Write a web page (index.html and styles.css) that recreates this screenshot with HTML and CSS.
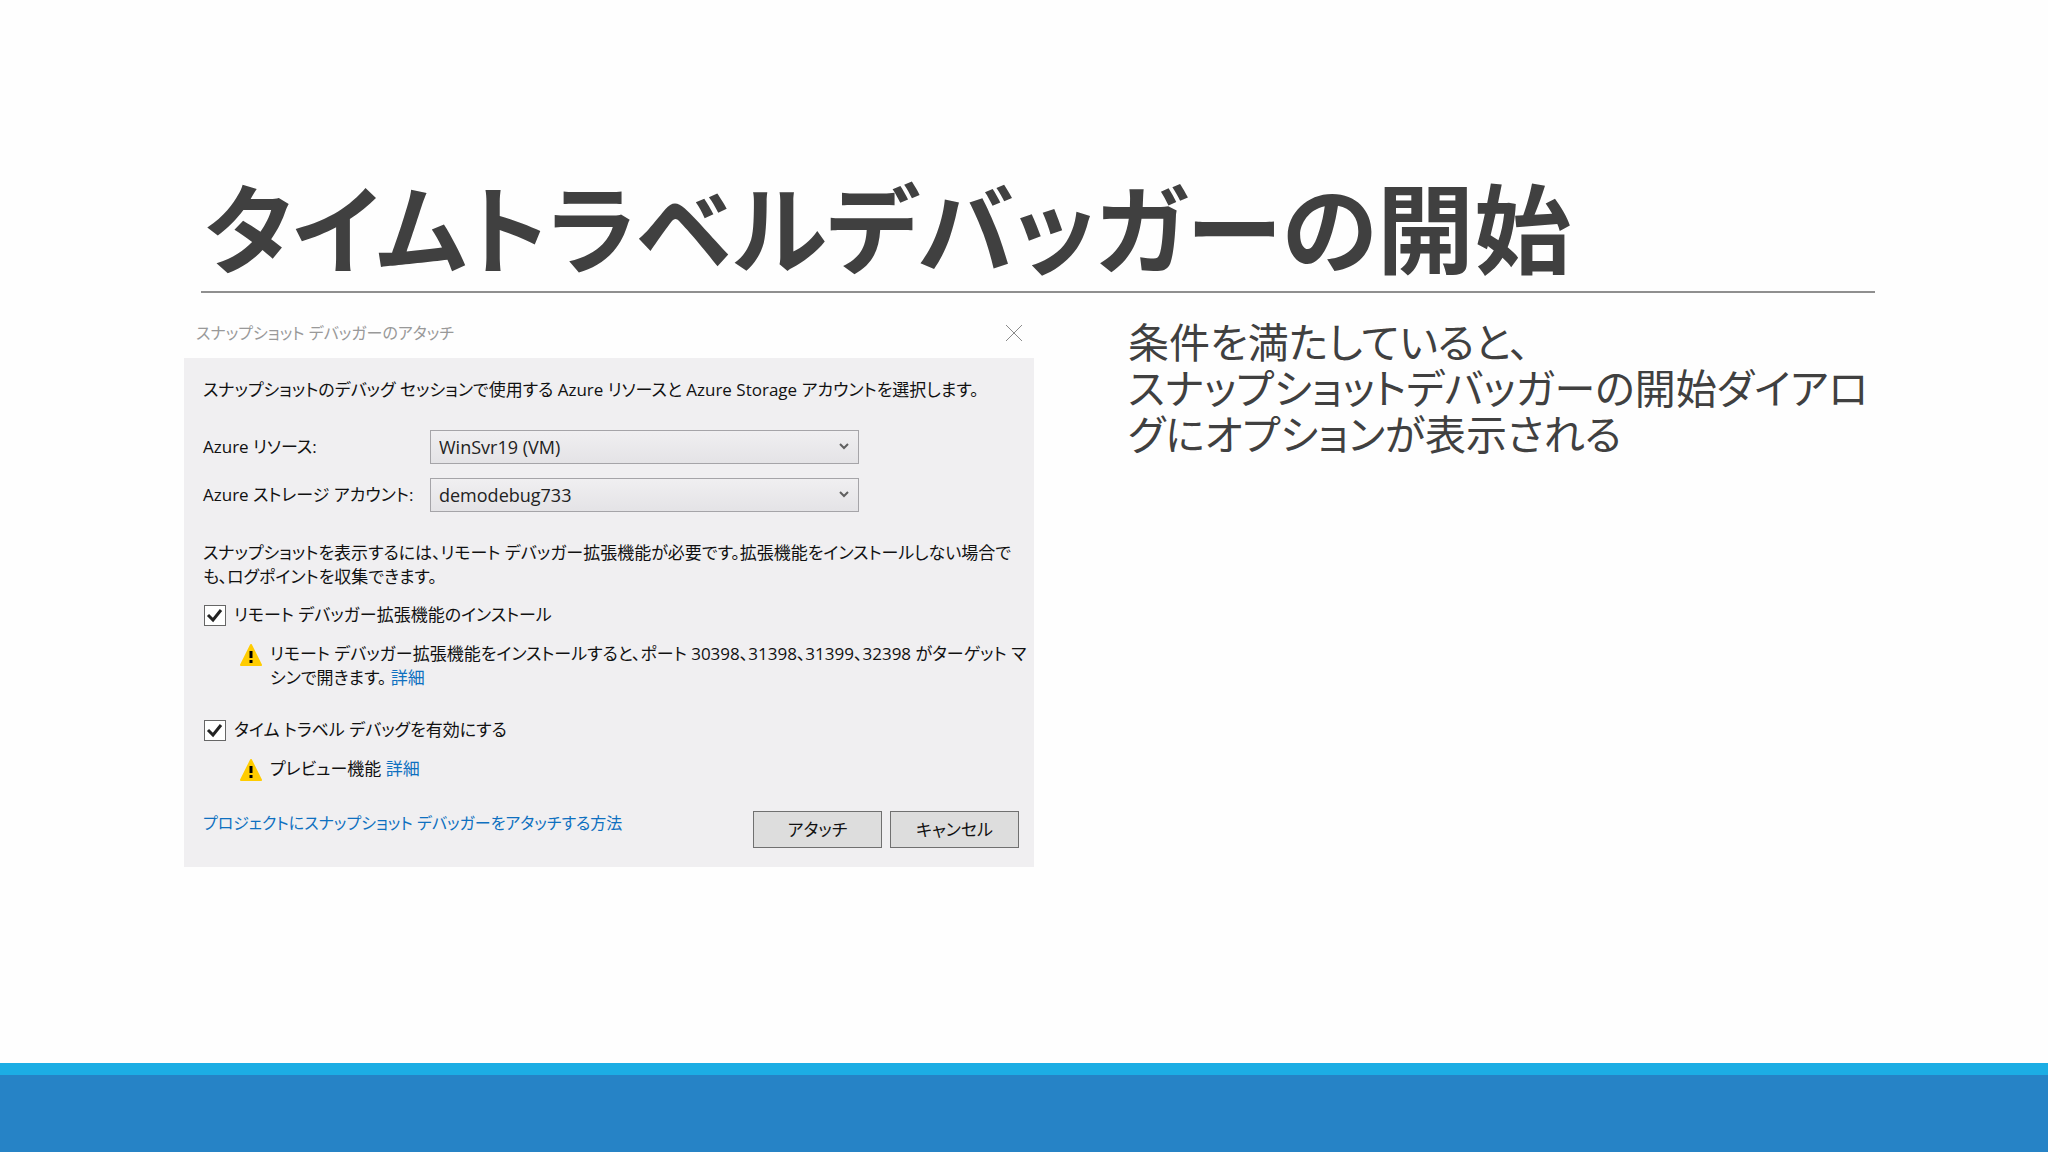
FILE: index.html
```html
<!DOCTYPE html>
<html lang="ja">
    <head>
        <meta charset="utf-8">
        <title>タイムトラベルデバッガーの開始</title>
        <link rel="stylesheet" href="styles.css">
    </head>
    <body>
        <header class="slide-header">
            <h1>タイムトラベルデバッガーの開始</h1>
        </header>
        <main class="slide-body">
            <form class="dialog">
                <div class="titlebar">
                    <span>スナップショット デバッガーのアタッチ</span>
                    <button type="button" class="close" aria-label="閉じる">
                        <svg width="18" height="18" viewBox="0 0 18 18"><path d="M1 1L17 17M17 1L1 17"/></svg>
                    </button>
                </div>
                <div class="content">
                    <p class="intro">スナップショットのデバッグ セッションで使用する Azure リソースと Azure Storage アカウントを選択します。</p>
                    <div class="field">
                        <label for="resource">Azure リソース:</label>
                        <select id="resource"><option>WinSvr19 (VM)</option></select>
                    </div>
                    <div class="field">
                        <label for="storage">Azure ストレージ アカウント:</label>
                        <select id="storage"><option>demodebug733</option></select>
                    </div>
                    <p class="note">スナップショットを表示するには、リモート デバッガー拡張機能が必要です。拡張機能をインストールしない場合で<br>も、ログポイントを収集できます。</p>
                    <div class="check">
                        <input id="remote" type="checkbox" checked>
                        <label for="remote">リモート デバッガー拡張機能のインストール</label>
                    </div>
                    <div class="warning">
                        <svg width="24" height="24" viewBox="0 0 24 24"><path class="tri" d="M12 3L22 23H2Z"/><path class="mark" d="M12 9V16M12 18V21"/></svg>
                        <p>リモート デバッガー拡張機能をインストールすると、ポート 30398、31398、31399、32398 がターゲット マ<br>シンで開きます。 <a href="#">詳細</a></p>
                    </div>
                    <div class="check">
                        <input id="ttd" type="checkbox" checked>
                        <label for="ttd">タイム トラベル デバッグを有効にする</label>
                    </div>
                    <div class="warning">
                        <svg width="24" height="24" viewBox="0 0 24 24"><path class="tri" d="M12 3L22 23H2Z"/><path class="mark" d="M12 9V16M12 18V21"/></svg>
                        <p>プレビュー機能 <a href="#">詳細</a></p>
                    </div>
                    <div class="actions">
                        <a href="#">プロジェクトにスナップショット デバッガーをアタッチする方法</a>
                        <button type="button">アタッチ</button>
                        <button type="button">キャンセル</button>
                    </div>
                </div>
            </form>
            <p class="description">条件を満たしていると、<br>スナップショットデバッガーの開始ダイアロ<br>グにオプションが表示される</p>
        </main>
        <footer class="slide-footer"></footer>
    </body>
</html>
```
FILE: styles.css
```css
* { box-sizing: border-box; }

body {
    color: #404040;
    background: #fefefe;
    display: flex;
    flex-direction: column;
    font-family: "Noto Sans CJK JP", sans-serif;
    font-feature-settings: "palt";
    margin: 0;
    min-height: 100vh;
}

h1, p { margin: 0; }

a {
    color: #0e70c0;
    text-decoration: none;
}

.slide-header {
    border-bottom: 2px solid #8f8f8f;
    margin: 0 173px 0 201px;
    padding: 165px 0 8px 3px;
}

.slide-header h1 {
    font-size: 97px;
    font-weight: 700;
    line-height: 118px;
    white-space: nowrap;
}

.slide-body {
    align-items: start;
    display: grid;
    flex: 1;
    gap: 94px;
    grid-template-columns: minmax(0, 850fr) minmax(0, 746fr);
    padding: 15px 174px 0 184px;
}

.description {
    font-size: 41px;
    line-height: 46px;
    padding-top: 9px;
    white-space: nowrap;
}

.slide-footer {
    background: #2683c6;
    border-top: 12px solid #1cade4;
    height: 89px;
}

/* dialog */
.dialog {
    color: #111;
    font-family: "Open Sans", "Noto Sans CJK JP", sans-serif;
    font-size: 17px;
    line-height: 24px;
    white-space: nowrap;
}

.titlebar {
    align-items: center;
    color: #999;
    display: flex;
    font-size: 16px;
    height: 50px;
    justify-content: space-between;
    padding: 0 11px 0 12px;
}

.close {
    background: none;
    border: 0;
    height: 18px;
    padding: 0;
    width: 18px;
}

.close svg {
    display: block;
    fill: none;
    stroke: #8a8a8a;
}

.content {
    background: #f0eff1;
    padding: 20px 15px 19px 19px;
}

.intro { margin-bottom: 28px; }

.field {
    align-items: center;
    display: flex;
    margin-bottom: 14px;
}

.field label { width: 227px; }

.field select {
    appearance: none;
    background: url("data:image/svg+xml,%3Csvg xmlns='http://www.w3.org/2000/svg' width='12' height='8'%3E%3Cpath d='M2 1L6 5L10 1' fill='none' stroke='%23606060' stroke-width='2'/%3E%3C/svg%3E") no-repeat right 8px center, linear-gradient(#f0eff1, #e4e3e6);
    border: 1px solid #a5a4a8;
    border-radius: 0;
    color: #222;
    font: inherit;
    font-size: 18px;
    height: 34px;
    padding: 0 8px;
    width: 429px;
}

.note {
    margin: 29px 0 14px;
}

.check {
    align-items: center;
    display: flex;
    gap: 8px;
}

.check input {
    appearance: none;
    background: #fff url("data:image/svg+xml,%3Csvg xmlns='http://www.w3.org/2000/svg' width='20' height='18'%3E%3Cpath d='M3 9L8 14L16 4' fill='none' stroke='%23222' stroke-width='3'/%3E%3C/svg%3E") no-repeat center;
    border: 1px solid #666;
    height: 21px;
    margin: 0 0 0 1px;
    width: 22px;
}

.warning {
    display: flex;
    gap: 7px;
    margin: 15px 0 28px 36px;
}

.warning svg { flex: none; }

.warning .tri {
    fill: #fc0;
    stroke: #fc0;
    stroke-linejoin: round;
    stroke-width: 2;
}

.warning .mark {
    stroke: #000;
    stroke-width: 3;
}

.actions {
    display: flex;
    gap: 8px;
    padding-top: 2px;
}

.actions a {
    font-size: 16px;
    margin-right: auto;
}

.actions button {
    background: #ddd;
    border: 1px solid #707070;
    color: #111;
    font: inherit;
    font-feature-settings: inherit;
    height: 37px;
    padding: 0;
    width: 129px;
}
```
